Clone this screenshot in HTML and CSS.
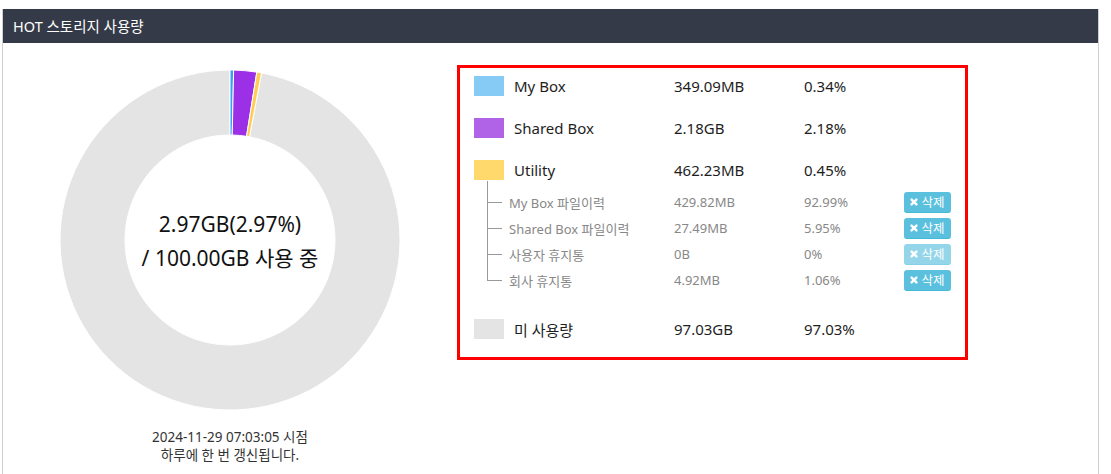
FILE: index.html
```html
<!DOCTYPE html>
<html lang="ko">
<head>
<meta charset="utf-8">
<title>HOT 스토리지 사용량</title>
<link rel="stylesheet" href="styles.css">
</head>
<body>
<section class="panel">
  <header class="panel-head">HOT 스토리지 사용량</header>
  <div class="panel-body">
    <div class="chart-col">
      <div class="donut">
        <svg width="340" height="340" viewBox="0 0 340 340">
          <path fill="#e4e4e4" stroke="#fff" stroke-width="1" d="M201.537 2.951 A170 170 0 1 1 170 0 L170 65 A105 105 0 1 0 189.479 66.823 Z"/>
          <path fill="#36a2eb" stroke="#fff" stroke-width="1" d="M170 0 A170 170 0 0 1 173.632 0.039 L172.243 65.024 A105 105 0 0 0 170 65 Z"/>
          <path fill="#9b30e6" stroke="#fff" stroke-width="1" d="M173.632 0.039 A170 170 0 0 1 196.804 2.127 L186.555 66.314 A105 105 0 0 0 172.243 65.024 Z"/>
          <path fill="#ffcd56" stroke="#fff" stroke-width="1" d="M196.804 2.127 A170 170 0 0 1 201.537 2.951 L189.479 66.823 A105 105 0 0 0 186.555 66.314 Z"/>
        </svg>
        <div class="donut-label">
          <div>2.97GB(2.97%)</div>
          <div>/ 100.00GB 사용 중</div>
        </div>
      </div>
      <div class="stamp">
        <div>2024-11-29 07:03:05 시점</div>
        <div>하루에 한 번 갱신됩니다.</div>
      </div>
    </div>

    <div class="legend">
      <div class="row main">
        <div class="name"><span class="sw sw-blue"></span>My Box</div>
        <div>349.09MB</div>
        <div>0.34%</div>
      </div>
      <div class="row main">
        <div class="name"><span class="sw sw-purple"></span>Shared Box</div>
        <div>2.18GB</div>
        <div>2.18%</div>
      </div>
      <div class="row main">
        <div class="name"><span class="sw sw-yellow"></span>Utility</div>
        <div>462.23MB</div>
        <div>0.45%</div>
      </div>
      <div class="sub-list">
        <div class="row sub">
          <div class="name">My Box 파일이력</div>
          <div>429.82MB</div>
          <div>92.99%</div>
          <button class="del" type="button"><svg class="x" viewBox="0 0 10 10" width="8" height="8"><path d="M2 2 L8 8 M8 2 L2 8"/></svg>삭제</button>
        </div>
        <div class="row sub">
          <div class="name">Shared Box 파일이력</div>
          <div>27.49MB</div>
          <div>5.95%</div>
          <button class="del" type="button"><svg class="x" viewBox="0 0 10 10" width="8" height="8"><path d="M2 2 L8 8 M8 2 L2 8"/></svg>삭제</button>
        </div>
        <div class="row sub">
          <div class="name">사용자 휴지통</div>
          <div>0B</div>
          <div>0%</div>
          <button class="del disabled" type="button"><svg class="x" viewBox="0 0 10 10" width="8" height="8"><path d="M2 2 L8 8 M8 2 L2 8"/></svg>삭제</button>
        </div>
        <div class="row sub">
          <div class="name">회사 휴지통</div>
          <div>4.92MB</div>
          <div>1.06%</div>
          <button class="del" type="button"><svg class="x" viewBox="0 0 10 10" width="8" height="8"><path d="M2 2 L8 8 M8 2 L2 8"/></svg>삭제</button>
        </div>
      </div>
      <div class="row main unused">
        <div class="name"><span class="sw sw-gray"></span>미 사용량</div>
        <div>97.03GB</div>
        <div>97.03%</div>
      </div>
    </div>
  </div>
</section>
</body>
</html>
```

FILE: styles.css
```css
html, body {
  margin: 0;
  padding: 0;
  background: #fff;
}
body {
  font-family: "Noto Sans", "Noto Sans CJK KR", sans-serif;
  color: #222;
}
.panel {
  margin: 9px 12px 0 2px;
  border-left: 1px solid #cfcfcf;
  border-right: 1px solid #cfcfcf;
  height: 465px;
}
.panel-head {
  height: 34px;
  background: #343a47;
  color: #fff;
  font-size: 14.5px;
  line-height: 34px;
  padding-left: 10px;
}
.panel-body {
  display: flex;
  align-items: flex-start;
}
.chart-col {
  width: 454px;
  padding-top: 27px;
  display: flex;
  flex-direction: column;
  align-items: center;
}
.donut {
  position: relative;
  width: 340px;
  height: 340px;
}
.donut svg {
  display: block;
}
.donut-label {
  position: absolute;
  inset: 0;
  display: flex;
  flex-direction: column;
  align-items: center;
  justify-content: center;
  font-size: 21px;
  line-height: 34px;
  color: #111;
  padding-top: 2px;
  box-sizing: border-box;
}
.stamp {
  margin-top: 18px;
  font-size: 13.5px;
  line-height: 18px;
  color: #333;
  text-align: center;
}
.legend {
  margin-top: 22px;
  border: 3px solid #f00;
  padding: 0 0 10px 14px;
  box-sizing: border-box;
  width: 511px;
}
.row {
  display: grid;
  grid-template-columns: 200px 130px 100px 47px;
  align-items: center;
}
.row.main {
  height: 36px;
  font-size: 15px;
  color: #1e1e1e;
}
.row.main + .row.main {
  margin-top: 6px;
}
.row.main .name {
  display: flex;
  align-items: center;
}
.sw {
  width: 30px;
  height: 20px;
  margin-right: 10px;
  flex: none;
}
.sw-blue { background: #86cbf6; }
.sw-purple { background: #b163e8; }
.sw-yellow { background: #ffd96b; }
.sw-gray { background: #e4e4e4; }

.sub-list {
  position: relative;
  margin-top: -7px;
  padding-top: 8px;
}
.sub-list::before {
  content: "";
  position: absolute;
  left: 13px;
  top: 0;
  bottom: 13px;
  border-left: 1px solid #999;
}
.row.sub {
  position: relative;
  height: 26px;
  font-size: 13px;
  color: #888;
}
.row.sub .name {
  padding-left: 35px;
}
.row.sub::after {
  content: "";
  position: absolute;
  left: 13px;
  width: 15px;
  top: 13px;
  border-top: 1px solid #999;
}
.row.main.unused {
  margin-top: 18px;
}
.del {
  width: 47px;
  height: 21px;
  padding: 0;
  border: 0;
  border-radius: 3px;
  background: #5bc0de;
  border-bottom: 1px solid #46b8da;
  color: #fff;
  font-family: "Noto Sans CJK KR", sans-serif;
  font-size: 12.5px;
  display: flex;
  align-items: center;
  justify-content: center;
  gap: 3px;
  cursor: pointer;
}
.del.disabled {
  opacity: 0.65;
}
.del .x path {
  stroke: #fff;
  stroke-width: 3;
  stroke-linecap: round;
  fill: none;
}
```
